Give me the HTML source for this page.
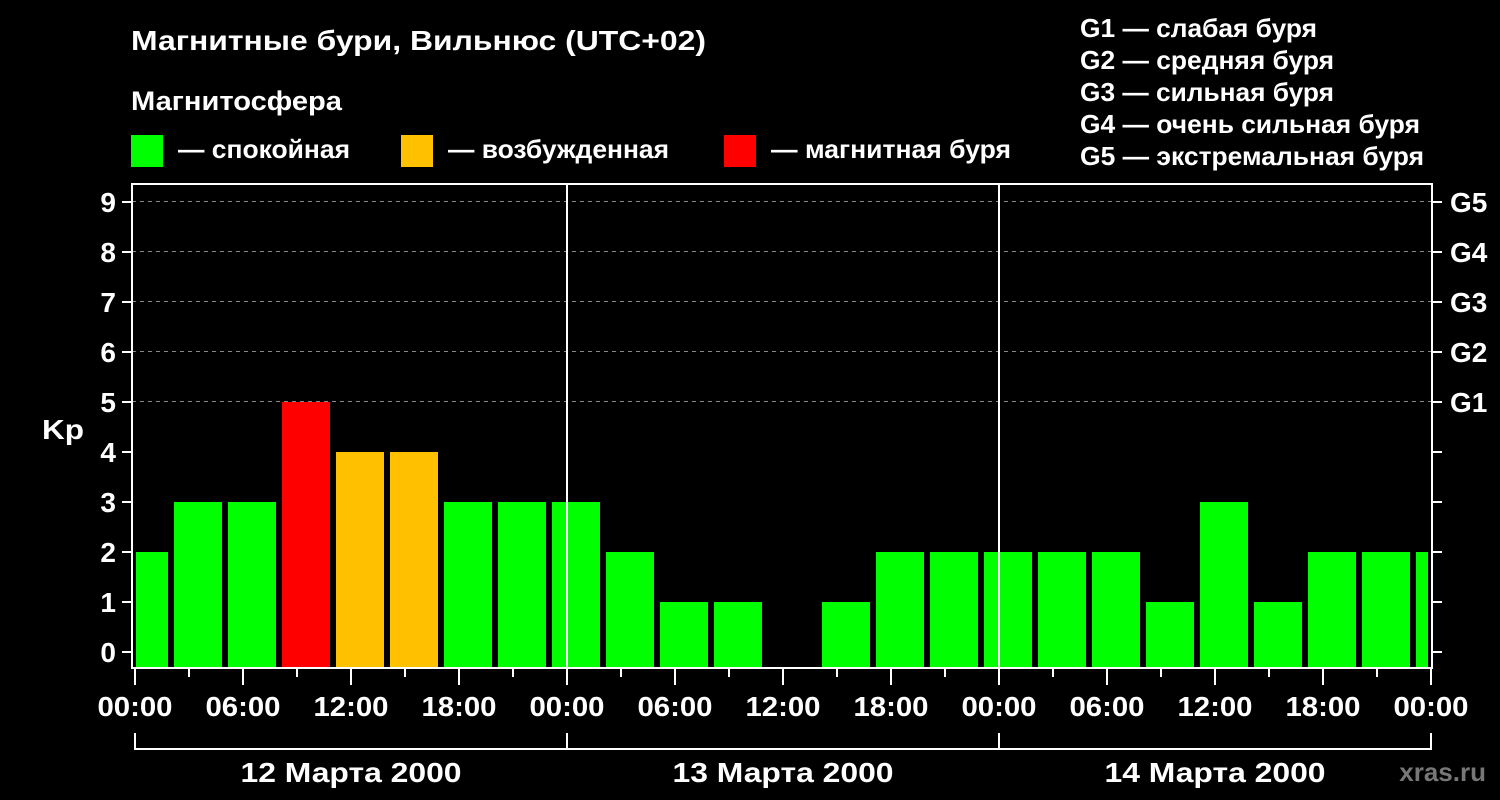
<!DOCTYPE html>
<html><head><meta charset="utf-8"><style>
html,body{margin:0;padding:0;background:#000;}
svg{display:block;}
text{font-family:"Liberation Sans",sans-serif;font-weight:bold;fill:#fff;}
</style></head><body>
<svg width="1500" height="800" viewBox="0 0 1500 800" xmlns="http://www.w3.org/2000/svg">
<rect width="1500" height="800" fill="#000"/>
<text x="131" y="50" font-size="28" textLength="575" lengthAdjust="spacingAndGlyphs">Магнитные бури, Вильнюс (UTC+02)</text>
<text x="131" y="110" font-size="27" textLength="211" lengthAdjust="spacingAndGlyphs">Магнитосфера</text>
<rect x="131" y="135" width="32" height="32" fill="#00ff00"/>
<text x="178" y="158" font-size="26" textLength="172" lengthAdjust="spacingAndGlyphs">— спокойная</text>
<rect x="401" y="135" width="32" height="32" fill="#ffc000"/>
<text x="448" y="158" font-size="26" textLength="221" lengthAdjust="spacingAndGlyphs">— возбужденная</text>
<rect x="724" y="135" width="32" height="32" fill="#ff0000"/>
<text x="771" y="158" font-size="26" textLength="240" lengthAdjust="spacingAndGlyphs">— магнитная буря</text>
<g font-size="26">
<text x="1080" y="37" textLength="237" lengthAdjust="spacingAndGlyphs">G1 — слабая буря</text>
<text x="1080" y="69" textLength="254" lengthAdjust="spacingAndGlyphs">G2 — средняя буря</text>
<text x="1080" y="101" textLength="254" lengthAdjust="spacingAndGlyphs">G3 — сильная буря</text>
<text x="1080" y="133" textLength="340" lengthAdjust="spacingAndGlyphs">G4 — очень сильная буря</text>
<text x="1080" y="165" textLength="344" lengthAdjust="spacingAndGlyphs">G5 — экстремальная буря</text>
</g>
<g stroke="#888" stroke-width="1" stroke-dasharray="4,4">
<line x1="132" y1="201.5" x2="1431" y2="201.5"/>
<line x1="132" y1="251.5" x2="1431" y2="251.5"/>
<line x1="132" y1="301.5" x2="1431" y2="301.5"/>
<line x1="132" y1="351.5" x2="1431" y2="351.5"/>
<line x1="132" y1="401.5" x2="1431" y2="401.5"/>
</g>
<g>
<rect x="136" y="552" width="32" height="116" fill="#00ff00"/>
<rect x="174" y="502" width="48" height="166" fill="#00ff00"/>
<rect x="228" y="502" width="48" height="166" fill="#00ff00"/>
<rect x="282" y="402" width="48" height="266" fill="#ff0000"/>
<rect x="336" y="452" width="48" height="216" fill="#ffc000"/>
<rect x="390" y="452" width="48" height="216" fill="#ffc000"/>
<rect x="444" y="502" width="48" height="166" fill="#00ff00"/>
<rect x="498" y="502" width="48" height="166" fill="#00ff00"/>
<rect x="552" y="502" width="48" height="166" fill="#00ff00"/>
<rect x="606" y="552" width="48" height="116" fill="#00ff00"/>
<rect x="660" y="602" width="48" height="66" fill="#00ff00"/>
<rect x="714" y="602" width="48" height="66" fill="#00ff00"/>
<rect x="822" y="602" width="48" height="66" fill="#00ff00"/>
<rect x="876" y="552" width="48" height="116" fill="#00ff00"/>
<rect x="930" y="552" width="48" height="116" fill="#00ff00"/>
<rect x="984" y="552" width="48" height="116" fill="#00ff00"/>
<rect x="1038" y="552" width="48" height="116" fill="#00ff00"/>
<rect x="1092" y="552" width="48" height="116" fill="#00ff00"/>
<rect x="1146" y="602" width="48" height="66" fill="#00ff00"/>
<rect x="1200" y="502" width="48" height="166" fill="#00ff00"/>
<rect x="1254" y="602" width="48" height="66" fill="#00ff00"/>
<rect x="1308" y="552" width="48" height="116" fill="#00ff00"/>
<rect x="1362" y="552" width="48" height="116" fill="#00ff00"/>
<rect x="1416" y="552" width="12" height="116" fill="#00ff00"/>
</g>
<line x1="567" y1="183" x2="567" y2="668" stroke="#fff" stroke-width="2"/>
<line x1="999" y1="183" x2="999" y2="668" stroke="#fff" stroke-width="2"/>
<rect x="132" y="184" width="1300" height="484" fill="none" stroke="#fff" stroke-width="2"/>
<g stroke="#fff" stroke-width="2">
<line x1="122" y1="202" x2="131" y2="202"/><line x1="122" y1="252" x2="131" y2="252"/>
<line x1="122" y1="302" x2="131" y2="302"/><line x1="122" y1="352" x2="131" y2="352"/>
<line x1="122" y1="402" x2="131" y2="402"/><line x1="122" y1="452" x2="131" y2="452"/>
<line x1="122" y1="502" x2="131" y2="502"/><line x1="122" y1="552" x2="131" y2="552"/>
<line x1="122" y1="602" x2="131" y2="602"/><line x1="122" y1="652" x2="131" y2="652"/>
<line x1="1433" y1="202" x2="1442" y2="202"/><line x1="1433" y1="252" x2="1442" y2="252"/>
<line x1="1433" y1="302" x2="1442" y2="302"/><line x1="1433" y1="352" x2="1442" y2="352"/>
<line x1="1433" y1="402" x2="1442" y2="402"/><line x1="1433" y1="452" x2="1442" y2="452"/>
<line x1="1433" y1="502" x2="1442" y2="502"/><line x1="1433" y1="552" x2="1442" y2="552"/>
<line x1="1433" y1="602" x2="1442" y2="602"/><line x1="1433" y1="652" x2="1442" y2="652"/>
</g>
<g font-size="28" text-anchor="end">
<text x="116" y="212">9</text><text x="116" y="262">8</text><text x="116" y="312">7</text>
<text x="116" y="362">6</text><text x="116" y="412">5</text><text x="116" y="462">4</text>
<text x="116" y="512">3</text><text x="116" y="562">2</text><text x="116" y="612">1</text>
<text x="116" y="662">0</text>
</g>
<text x="42" y="439" font-size="28" textLength="42" lengthAdjust="spacingAndGlyphs">Kp</text>
<g font-size="28">
<text x="1450" y="212">G5</text><text x="1450" y="262">G4</text><text x="1450" y="312">G3</text>
<text x="1450" y="362">G2</text><text x="1450" y="412">G1</text>
</g>
<g stroke="#fff" stroke-width="2">
<line x1="135" y1="669" x2="135" y2="685"/><line x1="189" y1="669" x2="189" y2="677"/>
<line x1="243" y1="669" x2="243" y2="685"/><line x1="297" y1="669" x2="297" y2="677"/>
<line x1="351" y1="669" x2="351" y2="685"/><line x1="405" y1="669" x2="405" y2="677"/>
<line x1="459" y1="669" x2="459" y2="685"/><line x1="513" y1="669" x2="513" y2="677"/>
<line x1="567" y1="669" x2="567" y2="685"/><line x1="621" y1="669" x2="621" y2="677"/>
<line x1="675" y1="669" x2="675" y2="685"/><line x1="729" y1="669" x2="729" y2="677"/>
<line x1="783" y1="669" x2="783" y2="685"/><line x1="837" y1="669" x2="837" y2="677"/>
<line x1="891" y1="669" x2="891" y2="685"/><line x1="945" y1="669" x2="945" y2="677"/>
<line x1="999" y1="669" x2="999" y2="685"/><line x1="1053" y1="669" x2="1053" y2="677"/>
<line x1="1107" y1="669" x2="1107" y2="685"/><line x1="1161" y1="669" x2="1161" y2="677"/>
<line x1="1215" y1="669" x2="1215" y2="685"/><line x1="1269" y1="669" x2="1269" y2="677"/>
<line x1="1323" y1="669" x2="1323" y2="685"/><line x1="1377" y1="669" x2="1377" y2="677"/>
<line x1="1431" y1="669" x2="1431" y2="685"/>
<polyline points="135,733 135,749 1431,749 1431,733" fill="none"/>
<line x1="567" y1="733" x2="567" y2="749"/><line x1="999" y1="733" x2="999" y2="749"/>
</g>
<g font-size="28" text-anchor="middle">
<text x="135" y="716" textLength="75" lengthAdjust="spacingAndGlyphs">00:00</text><text x="243" y="716" textLength="75" lengthAdjust="spacingAndGlyphs">06:00</text><text x="351" y="716" textLength="75" lengthAdjust="spacingAndGlyphs">12:00</text>
<text x="459" y="716" textLength="75" lengthAdjust="spacingAndGlyphs">18:00</text><text x="567" y="716" textLength="75" lengthAdjust="spacingAndGlyphs">00:00</text><text x="675" y="716" textLength="75" lengthAdjust="spacingAndGlyphs">06:00</text>
<text x="783" y="716" textLength="75" lengthAdjust="spacingAndGlyphs">12:00</text><text x="891" y="716" textLength="75" lengthAdjust="spacingAndGlyphs">18:00</text><text x="999" y="716" textLength="75" lengthAdjust="spacingAndGlyphs">00:00</text>
<text x="1107" y="716" textLength="75" lengthAdjust="spacingAndGlyphs">06:00</text><text x="1215" y="716" textLength="75" lengthAdjust="spacingAndGlyphs">12:00</text><text x="1323" y="716" textLength="75" lengthAdjust="spacingAndGlyphs">18:00</text>
<text x="1431" y="716" textLength="75" lengthAdjust="spacingAndGlyphs">00:00</text>
<text x="351" y="782" textLength="221" lengthAdjust="spacingAndGlyphs">12 Марта 2000</text>
<text x="783" y="782" textLength="221" lengthAdjust="spacingAndGlyphs">13 Марта 2000</text>
<text x="1215" y="782" textLength="221" lengthAdjust="spacingAndGlyphs">14 Марта 2000</text>
</g>
<text x="1486" y="781" font-size="26" text-anchor="end" style="fill:#777">xras.ru</text>
</svg>
</body></html>
